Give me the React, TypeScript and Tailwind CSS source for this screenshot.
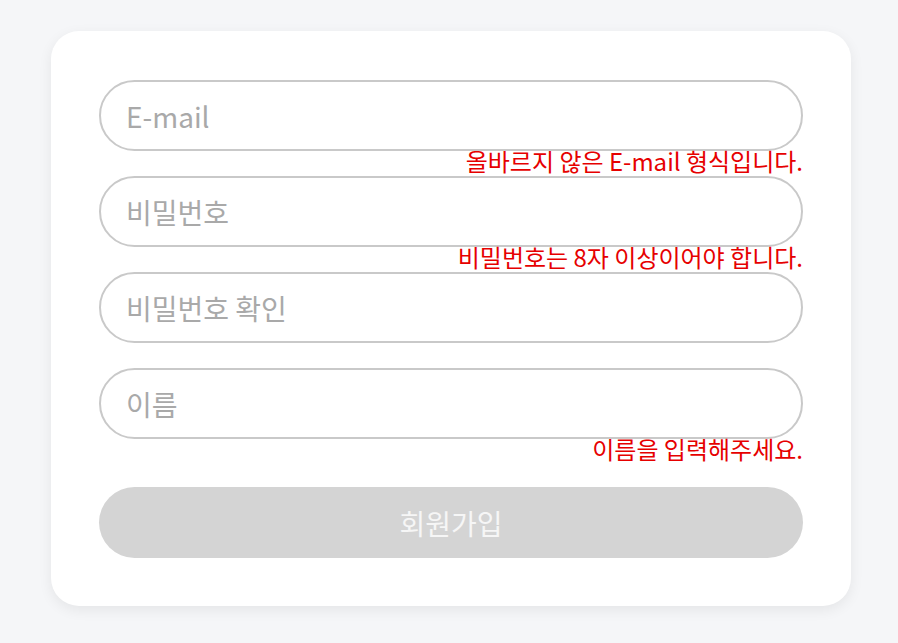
import { useState } from "react";

type Field = { name: string; placeholder: string; type: string; error?: string };

const fields: Field[] = [
  { name: "email", placeholder: "E-mail", type: "email", error: "올바르지 않은 E-mail 형식입니다." },
  { name: "password", placeholder: "비밀번호", type: "password", error: "비밀번호는 8자 이상이어야 합니다." },
  { name: "passwordConfirm", placeholder: "비밀번호 확인", type: "password" },
  { name: "name", placeholder: "이름", type: "text", error: "이름을 입력해주세요." },
];

export default function App() {
  const [values, setValues] = useState<Record<string, string>>({});

  return (
    <div
      className="min-h-screen bg-[#f5f6f8] pt-[31px] pl-[51px]"
      style={{ fontFamily: '"Noto Sans CJK KR", "Noto Sans", sans-serif' }}
    >
      <form
        onSubmit={(e) => e.preventDefault()}
        className="w-[800px] rounded-[28px] bg-white px-[48px] pt-[49px] pb-[48px] shadow-[0_4px_14px_rgba(0,0,0,0.07)]"
      >
        {fields.map((f) => (
          <div key={f.name}>
            <input
              type={f.type}
              placeholder={f.placeholder}
              value={values[f.name] ?? ""}
              onChange={(e) => setValues({ ...values, [f.name]: e.target.value })}
              className="block h-[71px] w-full rounded-full border-2 border-[#c9c9c9] bg-white px-[25px] text-[28px] text-[#333] outline-none placeholder:text-[#a9a9a9]"
            />
            <p className="h-[25px] text-right text-[24px] leading-[19px] text-[#e60000]">{f.error}</p>
          </div>
        ))}
        <button
          type="submit"
          disabled
          className="mt-[23px] block h-[71px] w-full rounded-full bg-[#d4d4d4] text-[28px] text-[#f6f6f6]"
        >
          회원가입
        </button>
      </form>
    </div>
  );
}
